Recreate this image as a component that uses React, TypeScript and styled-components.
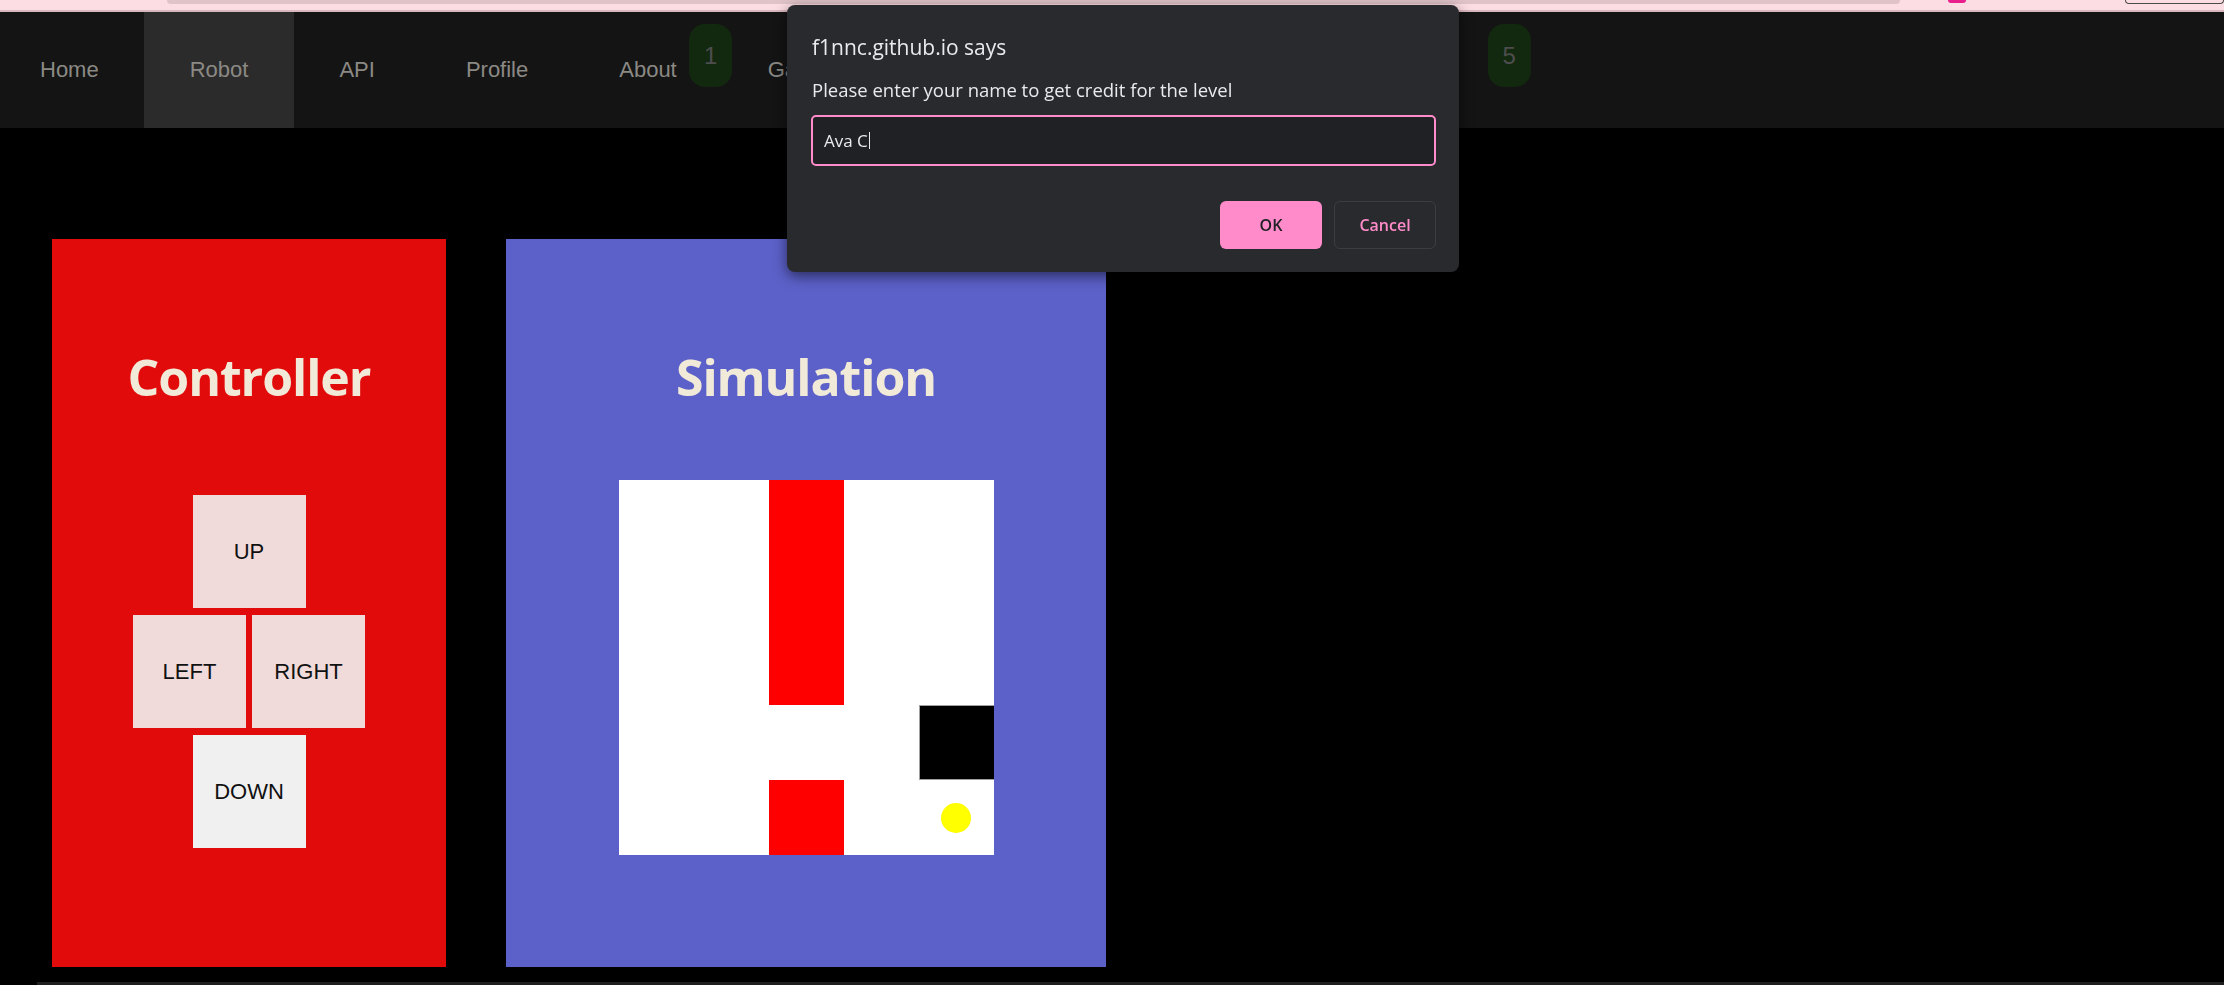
import React from "react";
import styled, { createGlobalStyle } from "styled-components";

const GlobalStyle = createGlobalStyle`
  html, body { margin: 0; padding: 0; background: #000; }
  body {
    width: 2224px;
    height: 985px;
    overflow: hidden;
    font-family: "Liberation Sans", Arial, sans-serif;
  }
  * { box-sizing: border-box; }
`;

const Page = styled.div`
  display: flex;
  flex-direction: column;
  height: 985px;
  background: #000;
`;

const Chrome = styled.div`
  flex: none;
  height: 12px;
  background: #fddde4;
  border-bottom: 2px solid #d9b7be;
  display: flex;
  align-items: flex-start;
  padding-left: 167px;
`;

const ChromeTab = styled.div`
  width: 1733px;
  height: 4px;
  background: #dfc3c8;
  border-radius: 0 0 8px 8px;
`;

const ChromeIcon = styled.div`
  margin-left: 48px;
  width: 18px;
  height: 3px;
  background: #e91e8c;
  border-radius: 0 0 3px 3px;
`;

const ChromePill = styled.div`
  margin-left: 159px;
  width: 99px;
  height: 4px;
  border: 1px solid #4a4a4a;
  border-top: none;
  border-radius: 0 0 10px 10px;
`;

const Nav = styled.nav`
  flex: none;
  height: 116px;
  background: #141414;
  display: flex;
  align-items: stretch;
`;

const NavItem = styled.a<{ $active?: boolean }>`
  position: relative;
  display: flex;
  align-items: center;
  padding: 0 45.5px;
  font-size: 22px;
  color: #8b8984;
  text-decoration: none;
  white-space: nowrap;
  background: ${(p) => (p.$active ? "#2b2b2b" : "transparent")};
  &:first-child {
    padding-left: 40px;
  }
`;

const Badge = styled.span<{ $right: number }>`
  position: absolute;
  top: 12px;
  right: ${(p) => -p.$right}px;
  width: 43px;
  height: 63px;
  border-radius: 16px;
  background: #12290f;
  color: #4d4d4d;
  font-size: 24px;
  display: flex;
  align-items: center;
  justify-content: center;
`;

const Main = styled.main`
  flex: 1;
  display: flex;
  align-items: flex-start;
  gap: 60px;
  padding: 111px 0 0 52px;
`;

const Panel = styled.section<{ $bg: string; $width: number }>`
  width: ${(p) => p.$width}px;
  height: 728px;
  background: ${(p) => p.$bg};
  display: flex;
  flex-direction: column;
  align-items: center;
  padding-top: 113px;
`;

const PanelTitle = styled.h2`
  margin: 0;
  font-family: "Open Sans", "Noto Sans", sans-serif;
  font-weight: 700;
  font-size: 50px;
  line-height: 50px;
  letter-spacing: -1.1px;
  color: #f2ead8;
`;

const Pad = styled.div`
  margin-top: 93px;
  display: grid;
  grid-template-columns: repeat(2, 113px);
  grid-template-rows: repeat(3, 113px);
  column-gap: 6px;
  row-gap: 7px;
`;

const PadButton = styled.button<{ $wide?: boolean; $light?: boolean }>`
  width: 113px;
  height: 113px;
  border: none;
  padding: 0;
  margin: 0;
  background: ${(p) => (p.$light ? "#f0f0f0" : "#f0dada")};
  color: #111;
  font-family: "Liberation Sans", Arial, sans-serif;
  font-size: 22px;
  grid-column: ${(p) => (p.$wide ? "1 / span 2" : "auto")};
  justify-self: center;
  cursor: pointer;
`;

const Board = styled.div`
  margin-top: 78px;
  width: 375px;
  height: 375px;
  background: #fff;
  display: grid;
  grid-template-columns: repeat(5, 75px);
  grid-template-rows: repeat(5, 75px);
`;

type CellKind = "empty" | "wall" | "block" | "goal";

const Cell = styled.div<{ $kind: CellKind }>`
  display: flex;
  align-items: center;
  justify-content: center;
  background: ${(p) =>
    p.$kind === "wall" ? "#ff0000" : p.$kind === "block" ? "#000" : "#fff"};
  box-shadow: ${(p) =>
    p.$kind === "block" ? "inset 1px 1px 0 #a0a0a0, inset 0 -1px 0 #a0a0a0" : "none"};
`;

const Goal = styled.div`
  width: 30px;
  height: 30px;
  border-radius: 50%;
  background: #ffff00;
`;

const ScrollEdge = styled.div`
  flex: none;
  height: 3px;
  margin-left: 37px;
  background: #1e1e1e;
`;

const Dialog = styled.div`
  position: fixed;
  left: 787px;
  top: 5px;
  width: 672px;
  height: 267px;
  background: #292a2d;
  border-radius: 8px;
  box-shadow: 0 4px 14px rgba(0, 0, 0, 0.55);
  padding: 28px 23px 23px 24px;
  display: flex;
  flex-direction: column;
  font-family: "Open Sans", "Noto Sans", sans-serif;
  color: #e8eaed;
`;

const DialogTitle = styled.div`
  font-size: 21px;
  line-height: 28px;
  margin-left: 1px;
`;

const DialogMessage = styled.div`
  margin-top: 17px;
  font-size: 18.5px;
  line-height: 24px;
  margin-left: 1px;
`;

const PromptField = styled.div`
  margin-top: 13px;
  height: 51px;
  border: 2px solid #ff8bcb;
  border-radius: 5px;
  background: #202124;
  display: flex;
  align-items: center;
  padding-left: 11px;
  font-size: 17px;
  color: #e8eaed;
`;

const Caret = styled.span`
  display: inline-block;
  width: 1px;
  height: 17px;
  margin-left: 1px;
  background: #e8eaed;
`;

const DialogActions = styled.div`
  margin-top: 35px;
  display: flex;
  justify-content: flex-end;
  gap: 12px;
`;

const DialogButton = styled.button<{ $primary?: boolean }>`
  width: 102px;
  height: 48px;
  border-radius: 6px;
  font-family: "Open Sans", "Noto Sans", sans-serif;
  font-size: 16px;
  font-weight: 600;
  cursor: pointer;
  background: ${(p) => (p.$primary ? "#ff8bcb" : "transparent")};
  color: ${(p) => (p.$primary ? "#202124" : "#ff8bcb")};
  border: ${(p) => (p.$primary ? "none" : "1px solid #3c3d41")};
`;

const board: CellKind[][] = [
  ["empty", "empty", "wall", "empty", "empty"],
  ["empty", "empty", "wall", "empty", "empty"],
  ["empty", "empty", "wall", "empty", "empty"],
  ["empty", "empty", "empty", "empty", "block"],
  ["empty", "empty", "wall", "empty", "goal"],
];

export default function App() {
  return (
    <Page>
      <GlobalStyle />
      <Chrome>
        <ChromeTab />
        <ChromeIcon />
        <ChromePill />
      </Chrome>
      <Nav>
        <NavItem href="#">Home</NavItem>
        <NavItem href="#" $active>
          Robot
        </NavItem>
        <NavItem href="#">API</NavItem>
        <NavItem href="#">Profile</NavItem>
        <NavItem href="#">
          About
          <Badge $right={10}>1</Badge>
        </NavItem>
        <NavItem href="#">Games</NavItem>
        <NavItem href="#">Leaderboard</NavItem>
        <NavItem href="#">Challenges</NavItem>
        <NavItem href="#">
          Tutorials
          <Badge $right={55}>5</Badge>
        </NavItem>
      </Nav>
      <Main>
        <Panel $bg="#e20b0b" $width={394}>
          <PanelTitle>Controller</PanelTitle>
          <Pad>
            <PadButton $wide>UP</PadButton>
            <PadButton>LEFT</PadButton>
            <PadButton>RIGHT</PadButton>
            <PadButton $wide $light>
              DOWN
            </PadButton>
          </Pad>
        </Panel>
        <Panel $bg="#5c61c9" $width={600}>
          <PanelTitle>Simulation</PanelTitle>
          <Board>
            {board.flatMap((row, r) =>
              row.map((kind, c) => (
                <Cell key={`${r}-${c}`} $kind={kind}>
                  {kind === "goal" && <Goal />}
                </Cell>
              ))
            )}
          </Board>
        </Panel>
      </Main>
      <ScrollEdge />
      <Dialog role="dialog">
        <DialogTitle>f1nnc.github.io says</DialogTitle>
        <DialogMessage>Please enter your name to get credit for the level</DialogMessage>
        <PromptField>
          Ava C<Caret />
        </PromptField>
        <DialogActions>
          <DialogButton $primary>OK</DialogButton>
          <DialogButton>Cancel</DialogButton>
        </DialogActions>
      </Dialog>
    </Page>
  );
}
